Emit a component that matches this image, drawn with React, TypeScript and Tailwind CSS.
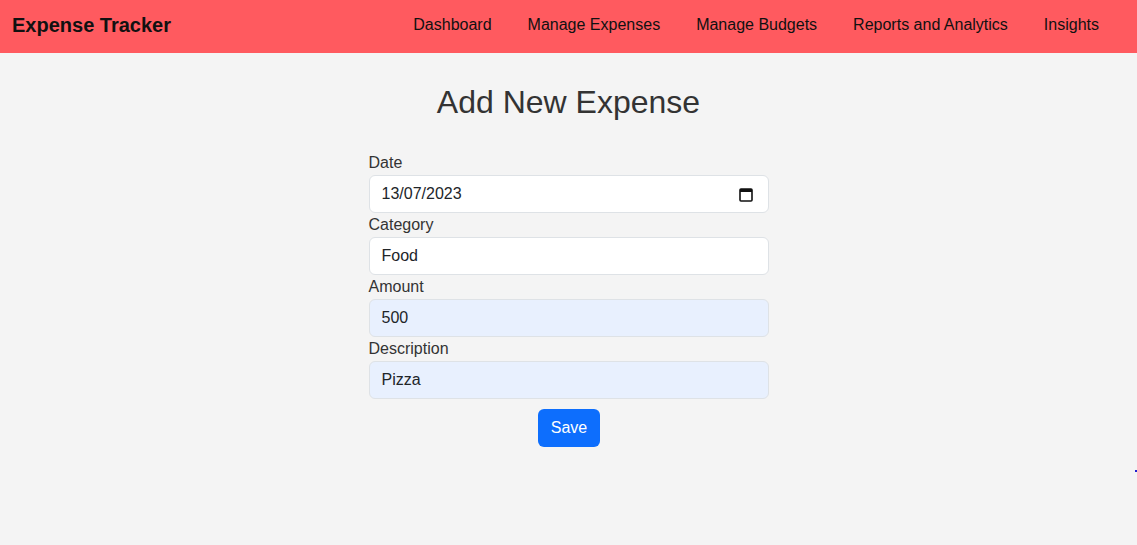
import React from "react";

const font = { fontFamily: '"Liberation Sans", Arial, sans-serif' };

function Field({ label, value, autofill }: { label: string; value: string; autofill?: boolean }) {
  return (
    <div className="flex flex-col">
      <label className="text-[16px] leading-[24px] text-[#333]">{label}</label>
      <input
        readOnly
        value={value}
        className={`h-[38px] w-full rounded-[6px] border border-[#dee2e6] px-[12px] text-[16px] text-[#212529] outline-none ${autofill ? "bg-[#e8f0fe]" : "bg-white"}`}
        style={font}
      />
    </div>
  );
}

export default function App() {
  return (
    <div className="relative min-h-[545px] bg-[#f4f4f4]" style={font}>
      <nav className="flex h-[53px] items-center justify-between bg-[#ff5a5f] pb-[3px] pl-[12px] pr-[38px]">
        <div className="text-[20px] font-bold text-[#111]">Expense Tracker</div>
        <div className="flex items-center gap-[36px] text-[16px] text-[#111]">
          <span>Dashboard</span>
          <span>Manage Expenses</span>
          <span>Manage Budgets</span>
          <span>Reports and Analytics</span>
          <span>Insights</span>
        </div>
      </nav>
      <div className="flex flex-col items-center">
        <h1 className="mt-[30px] text-[32px] leading-[38px] text-[#333]">Add New Expense</h1>
        <form className="mt-[30px] flex w-[400px] flex-col">
          <div className="flex flex-col">
            <label className="text-[16px] leading-[24px] text-[#333]">Date</label>
            <div className="flex h-[38px] w-full items-center justify-between rounded-[6px] border border-[#dee2e6] bg-white pl-[12px] pr-[15px] text-[16px] text-[#212529]">
              <span>13/07/2023</span>
              <svg width="14" height="15" viewBox="0 0 14 15" fill="none">
                <rect x="1" y="2" width="12" height="12" rx="1" stroke="#111" strokeWidth="1.6" />
                <rect x="1" y="2" width="12" height="3" fill="#111" />
              </svg>
            </div>
          </div>
          <Field label="Category" value="Food" />
          <Field label="Amount" value="500" autofill />
          <Field label="Description" value="Pizza" autofill />
          <div className="mt-[10px] flex justify-center">
            <button type="button" className="ml-[1px] h-[38px] rounded-[6px] bg-[#0d6efd] px-[13px] text-[16px] text-white" style={font}>
              Save
            </button>
          </div>
        </form>
      </div>
      <div className="absolute left-[1135px] top-[470px] h-[2px] w-[2px] bg-[#2020d0]" />
    </div>
  );
}
